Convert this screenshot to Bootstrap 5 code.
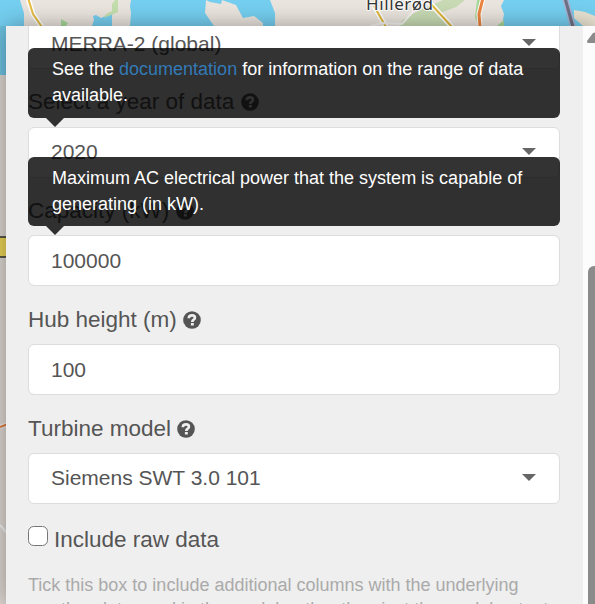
<!DOCTYPE html>
<html lang="en">
<head>
<meta charset="utf-8">
<meta name="viewport" content="width=device-width, initial-scale=1">
<title>Wind turbine settings</title>
<link href="https://cdn.jsdelivr.net/npm/bootstrap@5.3.0/dist/css/bootstrap.min.css" rel="stylesheet">
<style>
body { font-family: "Liberation Sans", Arial, sans-serif; color: #555; background: #c9c3bc; }
.stage { width: 595px; height: 604px; padding: 26px 0 0 6px; }
.map { z-index: 0; }
.map text { font-family: "Noto Sans", sans-serif; font-size: 17px; }
.panel { z-index: 1; height: 578px; box-shadow: 0 0 22px rgba(0,0,0,.35); }
.pane { width: 577px; background: #efefef; padding: 0 23px 0 22px; }
.settings { margin-top: -8px; }
.field { height: 51px; font-size: 21px; line-height: 49px; border: 1px solid #ddd; border-radius: 6px; padding: 0 23px 0 22px; color: #555; }
.choice { line-height: 47px; padding-bottom: 2px; }
.field:focus { box-shadow: none; }
.caption { height: 58px; padding-top: 16px; font-size: 22.5px; line-height: 33px; }
.caption-short { height: 57px; }
.caption-low { padding-top: 17px; }
.help { margin-top: -2px; }
.tip { left: 0; width: 532px; font-size: 18px; line-height: 25.7px; padding: 9px 24px 7px; border-radius: 6px; background: rgba(0,0,0,.8); color: #fff; opacity: 1; }
.tip::after { content: ""; position: absolute; left: 18px; top: 100%; border: solid transparent; border-width: 9px 9px 0; border-top-color: rgba(0,0,0,.8); }
.tip a { color: #337ab7; }
.tip-year { top: 30px; height: 70px; }
.tip-capacity { top: 139px; height: 69px; }
.tickbox { width: 20px; height: 20px; border: 1.5px solid #767676; border-radius: 4px; margin: 0 6px 0 0; }
.raw { padding-top: 22px; font-size: 22.5px; line-height: 28px; }
.hint { font-size: 18px; line-height: 24px; color: #aaa; margin-top: 19px; }
.scroller { width: 12px; background: #fcfcfc; }
.thumb { margin: 240px 0 0 5px; width: 12px; height: 352px; border-radius: 6px 0 0 0; background: #8b8b8b; }
.arrow { margin: 6px 0 0 4px; height: 12px; }
</style>
</head>
<body>
<div class="stage position-relative overflow-hidden">
  <svg class="map position-absolute top-0 start-0" width="595" height="604" viewBox="0 0 595 604" aria-hidden="true">
    <rect width="595" height="604" fill="#ebe5df"/>
    <path d="M0 0H275V26H0Z" fill="#75cff0"/>
    <path d="M0 26H6V75H0Z" fill="#75cff0"/>
    <path d="M20 0H117L113 6L112 13L101 18L96 15L93 16L94 20L92 26H24V13Z" fill="#ebe5df"/>
    <path d="M117 0H131L130 6L131 13L130 26H112V15L116 9L112 5Z" fill="#ebe5df"/>
    <path d="M115 0H118V12L104 18L106 14L112 11L112 4Z" fill="#c4dfad"/>
    <path d="M61 19L68 23L66 26H61Z" fill="#a9d99a"/>
    <path d="M206 0L205 13L214 26H263V23L254 16L243 18L236 5L222 0L221 4L210 2Z" fill="#ebe5df"/>
    <path d="M270 0L275 13V26H280V0Z" fill="#ebe5df"/>
    <path d="M504 0H595V26H503V20L504 14L501 6Z" fill="#75cff0"/>
    <path d="M400 26L402 20L420 10L432 5L443 0H465L456 7L443 12L440 17L448 26Z" fill="#c8dbb4"/>
    <path d="M477 0H482L478 14L482 18L478 24L475 17ZM504 20V26H497Z" fill="#a9d99a"/>
    <path d="M574 10L585 12L595 16V26H583L574 18Z" fill="#e9e2d2"/>
    <g fill="none">
      <path d="M28 -2L33 14L42 27" stroke="#fff" stroke-width="5"/><path d="M28 -2L33 14L42 27" stroke="#e6bd42" stroke-width="2"/>
      <path d="M374 6L386 27M430 3L452 27" stroke="#fff" stroke-width="5"/><path d="M374 6L386 27M430 3L452 27" stroke="#e0b83e" stroke-width="2"/>
      <path d="M483 -2L479 14L480 27" stroke="#fff" stroke-width="5"/><path d="M483 -2L479 14L480 27" stroke="#ed8440" stroke-width="3"/>
      <path d="M371 26L382 23L402 24L417 7" stroke="#f6f4f1" stroke-width="2"/>
      <path d="M565 -2L573 27" stroke="#a7b2cf" stroke-width="6"/><path d="M565 -2L573 27" stroke="#6d7187" stroke-width="3"/>
      <path d="M0 427L8 424" stroke="#fff" stroke-width="4"/><path d="M0 427L8 424" stroke="#ed8440" stroke-width="2"/>
      <path d="M0 525L7 533" stroke="#fff" stroke-width="2"/>
    </g>
    <rect x="-8" y="237" width="15" height="20" rx="2" fill="#f8e05c" stroke="#333" stroke-width="1.5"/>
    <rect y="26" width="6" height="578" fill="#000" opacity=".07"/>
    <text x="366" y="10" fill="#333" stroke="#fff" stroke-width="2" paint-order="stroke" textLength="67">Hillerød</text>
  </svg>

  <main class="panel position-relative d-flex">
    <section class="pane overflow-hidden">
      <form class="settings position-relative">
        <div class="field bg-white d-flex justify-content-between align-items-center"><span>MERRA-2 (global)</span>
          <svg width="14" height="9"><path d="M0 0H14L7 7Z" fill="#666"/></svg></div>
        <div class="caption">Select a year of data <svg class="help" width="18" height="18"><use href="#help"/></svg></div>
        <div class="field choice bg-white d-flex justify-content-between align-items-center"><span>2020</span>
          <svg width="14" height="7"><path d="M0 0H14L7 7Z" fill="#666"/></svg></div>
        <div class="caption caption-short">Capacity (kW) <svg class="help" width="18" height="18"><use href="#help"/></svg></div>
        <input class="field form-control" type="text" value="100000" aria-label="Capacity (kW)">
        <div class="caption caption-low">Hub height (m) <svg class="help" width="18" height="18"><use href="#help"/></svg></div>
        <input class="field form-control" type="text" value="100" aria-label="Hub height (m)">
        <div class="caption caption-low">Turbine model <svg class="help" width="18" height="18"><use href="#help"/></svg></div>
        <div class="field choice bg-white d-flex justify-content-between align-items-center"><span>Siemens SWT 3.0 101</span>
          <svg width="14" height="7"><path d="M0 0H14L7 7Z" fill="#666"/></svg></div>
        <label class="raw d-flex align-items-start"><input class="tickbox form-check-input flex-shrink-0" type="checkbox"><span class="raw-name">Include raw data</span></label>
        <p class="hint mb-0">Tick this box to include additional columns with the underlying<br><span class="text-nowrap">weather data used in the model, rather than just the model output.</span></p>
        <div class="tip tip-year position-absolute" role="tooltip">See the <a class="text-decoration-none" href="#">documentation</a> for information on the range of data available.</div>
        <div class="tip tip-capacity position-absolute" role="tooltip">Maximum AC electrical power that the system is capable of generating (in kW).</div>
      </form>
    </section>
    <aside class="scroller position-relative overflow-hidden">
      <svg class="arrow position-absolute top-0 start-0" width="14" height="12"><path d="M0 9L6 1Q8 0 10 1L16 9Q16 11 14 11H1Q0 11 0 9Z" fill="#8b8b8b"/></svg>
      <div class="thumb"></div>
    </aside>
  </main>
</div>
<svg width="0" height="0" class="position-absolute"><defs><symbol id="help" viewBox="0 0 18 18"><circle cx="9" cy="9" r="8.8" fill="#555"/><path d="M5.8 7.2Q5.9 4.4 9.1 4.4Q11.9 4.4 11.9 6.7Q11.9 7.9 10.6 8.7Q9.3 9.4 9.3 10.9" fill="none" stroke="#efefef" stroke-width="2.7"/><rect x="7.9" y="12" width="2.9" height="2.5" fill="#efefef"/></symbol></defs></svg>
<script src="https://cdn.jsdelivr.net/npm/bootstrap@5.3.0/dist/js/bootstrap.bundle.min.js"></script>
</body>
</html>
